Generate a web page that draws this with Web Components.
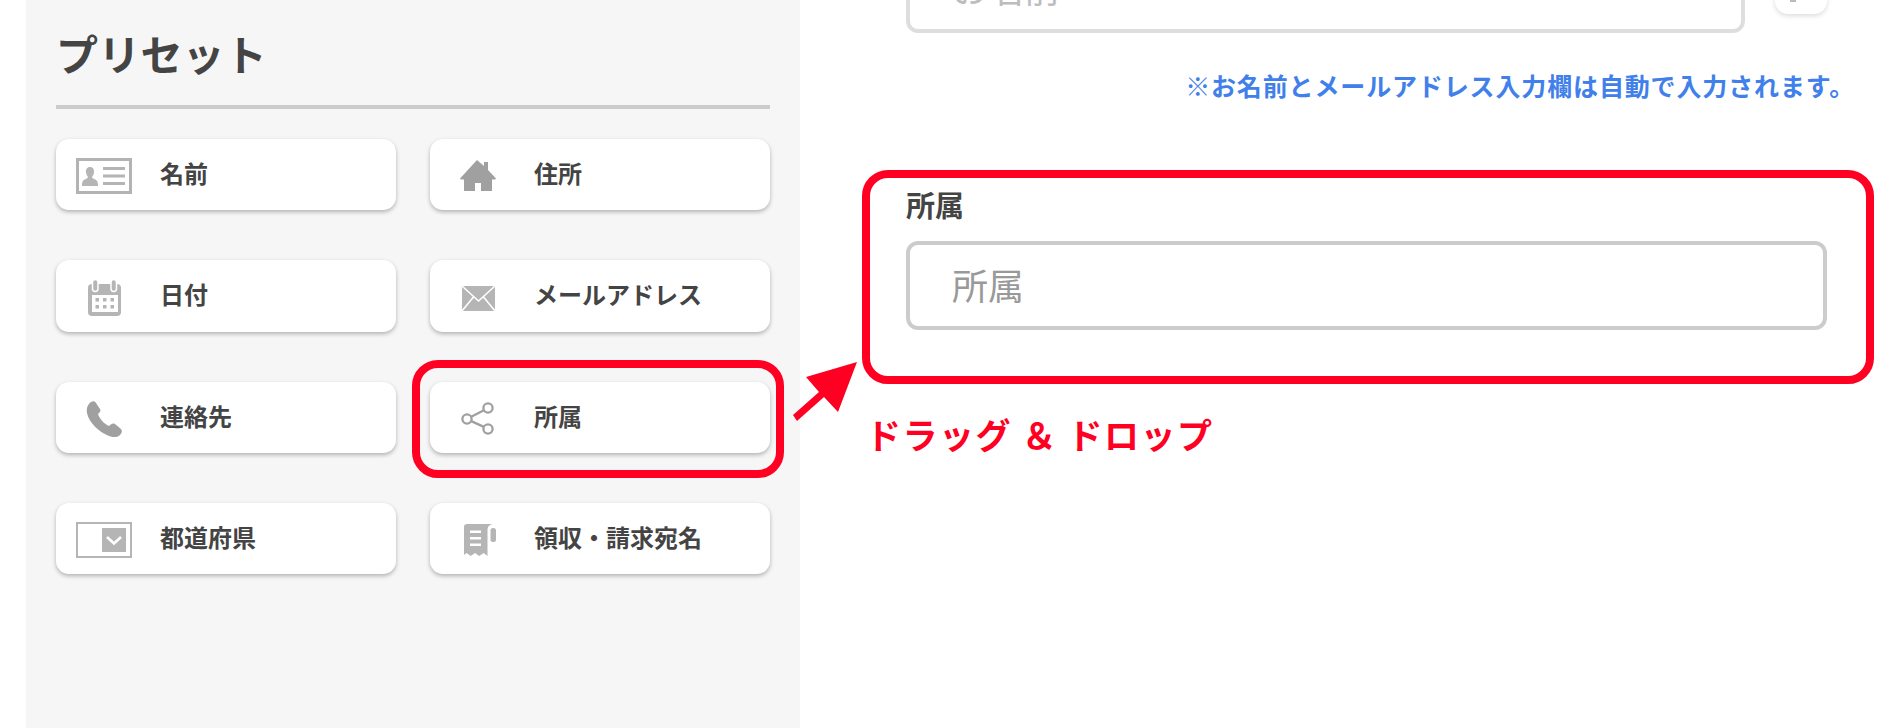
<!DOCTYPE html>
<html lang="ja"><head><meta charset="utf-8"><title>プリセット</title>
<style>
html,body{margin:0;height:728px;overflow:hidden;background:#fff}
body{font-family:"Noto Sans CJK JP","Noto Sans",sans-serif;color:#444}
</style></head><body>
<template id="t-card"><style>
:host{display:flex;align-items:center;height:71.33px;background:#fff;border-radius:13px;box-shadow:0 2px 4px rgba(0,0,0,.28)}
.i{width:96px;display:flex;justify-content:center;flex:none}
.t{margin:-3px 0 0 8px;font-size:24px;font-weight:700;color:#444;line-height:1;white-space:nowrap}
::slotted(svg){display:block}
</style><div class="i"><slot name="icon"></slot></div><div class="t"><slot></slot></div></template>

<template id="t-panel"><style>
:host{display:block;width:714px;height:728px;flex:none;margin-left:26px;padding:0 30px;background:#f6f6f6;box-sizing:content-box}
h2{margin:0;padding-top:23px;height:61px;line-height:60px;font-size:42px;font-weight:700;color:#444;letter-spacing:.2px}
hr{margin:21px 0 30px;border:0;height:4px;background:#ccc}
.g{display:grid;grid-template-columns:340px 340px;column-gap:34px;row-gap:50px}
</style><h2><slot name="title"></slot></h2><hr><div class="g"><slot></slot></div></template>

<template id="t-input"><style>
:host{display:flex;align-items:center;box-sizing:border-box;height:89px;border:4px solid var(--bd,#ccc);border-radius:12px;padding:0 42px 4px;background:#fff;font-size:36px;color:var(--fg,#999);white-space:nowrap}
</style><slot></slot></template>

<template id="t-outline"><style>
:host{display:block;box-sizing:border-box;border:8px solid #ff0022;border-radius:26px;background:transparent}
</style><slot></slot></template>

<template id="t-main"><style>
:host{display:block;flex:1;min-width:0;padding-left:62px}
.top{display:flex;gap:30px;margin:-56px 0 0 44px;align-items:flex-start}
.top ::slotted(x-input){width:839px;flex:none}
.btn{width:52px;height:70px;border-radius:13px;background:#fff;box-shadow:0 2px 5px rgba(0,0,0,.14);position:relative;flex:none;overflow:hidden}
.btn i{display:block;width:6px;height:2px;background:#bbb;margin:56px 0 0 15px}
.note{margin:32px 0 0;height:40px;line-height:40px;text-align:right;padding-right:45px;font-size:25px;font-weight:700;color:#4180ea;letter-spacing:.86px;white-space:nowrap}
.box{margin:65px 26px 0 0;height:214px}
.lab{font-size:29px;font-weight:700;color:#444;line-height:36px;margin:8px 0 0 36px}
.fld{margin:19px 39px 0 36px}
.dd{margin:28px 0 0 4px;font-size:35px;font-weight:700;color:#ff0022;line-height:44px;letter-spacing:1.5px;white-space:pre}
</style>
<div class="top"><slot name="top"></slot><div class="btn"><i></i></div></div>
<div class="note"><slot name="note"></slot></div>
<x-outline class="box"><div class="lab"><slot name="label"></slot></div><div class="fld"><slot name="field"></slot></div></x-outline>
<div class="dd"><slot name="drag"></slot></div></template>

<template id="t-app"><style>
:host{display:flex;position:relative;width:1900px;height:728px;overflow:hidden}
.hl{position:absolute;left:412px;top:360px;width:372px;height:118px}
.ar{position:absolute;left:790px;top:360px;display:block}
</style><slot></slot><x-outline class="hl"></x-outline>
<svg class="ar" width="70" height="64" viewBox="790 360 70 64"><polygon fill="#ff0022" points="857,362 806,377 819,392 793,415 797,421 824,397 838,412"/></svg></template>

<script>
for(const [n,id] of [['x-card','t-card'],['x-panel','t-panel'],['x-input','t-input'],['x-outline','t-outline'],['x-main','t-main'],['x-app','t-app']]){
  customElements.define(n,class extends HTMLElement{constructor(){super();this.attachShadow({mode:'open'}).appendChild(document.getElementById(id).content.cloneNode(true));}});
}
</script>

<x-app>
<x-panel>
<span slot="title">プリセット</span>
<x-card><svg slot="icon" width="56" height="40" viewBox="0 0 56 40"><rect x="1.5" y="4.5" width="53" height="33" fill="#fff" stroke="#b3b3b3" stroke-width="3"/><path fill="#b5b5b5" d="M14 12c3 0 4.500 2.500 4 5.500-.3 2-1 3-1.800 4-.3 1 .3 1.800 1.500 2.300 2.500 1 4.300 2 4.300 6v1.200H6v-1.200c0-4 1.800-5 4.300-6 1.200-.5 1.800-1.300 1.500-2.300-.8-1-1.500-2-1.800-4-.5-3 1-5.500 4-5.500z"/><path fill="#b5b5b5" d="M27 12h22v3H27zM27 19.500h22v3H27zM27 27h22v3H27z"/></svg>名前</x-card>
<x-card><svg slot="icon" width="56" height="40" viewBox="0 0 56 40"><path fill="#a0a0a0" d="M27 5l7 6V7h4v8l8 8.500-1 1h-3V36H31v-8h-6v8H14V24.500h-3l-1-1z"/></svg>住所</x-card>
<x-card><svg slot="icon" width="56" height="40" viewBox="0 0 56 40"><rect x="12" y="8" width="33" height="32" rx="4" fill="#b5b5b5"/><rect x="16" y="19" width="26" height="17" fill="#fff"/><rect x="16.500" y="3.500" width="5.500" height="12" rx="2.700" fill="#b5b5b5" stroke="#fff" stroke-width="1.500"/><rect x="35" y="3.500" width="5.500" height="12" rx="2.700" fill="#b5b5b5" stroke="#fff" stroke-width="1.500"/><path fill="#b5b5b5" d="M19.500 22H23v3.500h-3.500zM27 22h3.500v3.500H27zM34.500 22H38v3.500h-3.500zM19.500 29H23v3.500h-3.500zM27 29h3.500v3.500H27zM34.500 29H38v3.500h-3.500z"/></svg>日付</x-card>
<x-card><svg slot="icon" width="56" height="40" viewBox="0 0 56 40"><rect x="12" y="10" width="33" height="25" fill="#b5b5b5"/><path fill="none" stroke="#fff" stroke-width="1.600" d="M11.500 9.500L28.500 25 45.500 9.500M11.500 35.500L23.500 21M45.500 35.500L33.500 21"/></svg>メールアドレス</x-card>
<x-card><svg slot="icon" width="56" height="40" viewBox="0 0 56 40"><path fill="#a0a0a0" transform="translate(10 4)" d="M5 1C7-.5 9 0 10 2l4 6c1 2 0 3-2 5 1 4 6 10 11 12 2-2 4-3 6-2l6 5c1.500 2 1 4-1 6-3 3-7 2.500-11 1C13 31 3 22 1 12 0 7 2 3 5 1z"/></svg>連絡先</x-card>
<x-card><svg slot="icon" width="56" height="40" viewBox="0 0 56 40"><g fill="none" stroke="#a0a0a0" stroke-width="2.300"><circle cx="38" cy="11" r="4.600"/><circle cx="17" cy="22" r="4.600"/><circle cx="38" cy="32" r="4.600"/><path d="M21.200 19.800L33.900 13.200M21.200 24.100L33.900 29.900"/></g></svg>所属</x-card>
<x-card><svg slot="icon" width="56" height="40" viewBox="0 0 56 40"><rect x="1" y="4" width="54" height="34" fill="#fff" stroke="#b5b5b5" stroke-width="2"/><rect x="26" y="9" width="24" height="24" fill="#b5b5b5"/><path fill="none" stroke="#fff" stroke-width="2.600" d="M31 18l7 6.500L45 18"/></svg>都道府県</x-card>
<x-card><svg slot="icon" width="56" height="40" viewBox="0 0 56 40"><path fill="#b5b5b5" d="M17 5h26c-3 .5-5 2-5.500 5v27l-3.800-3-4.500 3-4.200-3-4.200 3-4.300-3-2.500 2V8c0-2 1-3 3-3z"/><rect x="40.500" y="9" width="5.500" height="14" rx="2.500" fill="#b5b5b5"/><path fill="#fff" d="M20 11.500h11V14H20zM20 18h11v2.500H20zM20 24.500h11V27H20z"/></svg>領収・請求宛名</x-card>
</x-panel>
<x-main>
<x-input slot="top" style="--bd:#dedede;--fg:#bdbdbd">お名前</x-input>
<span slot="note">※お名前とメールアドレス入力欄は自動で入力されます。</span>
<span slot="label">所属</span>
<x-input slot="field">所属</x-input>
<span slot="drag">ドラッグ ＆ ドロップ</span>
</x-main>
</x-app>
</body></html>
